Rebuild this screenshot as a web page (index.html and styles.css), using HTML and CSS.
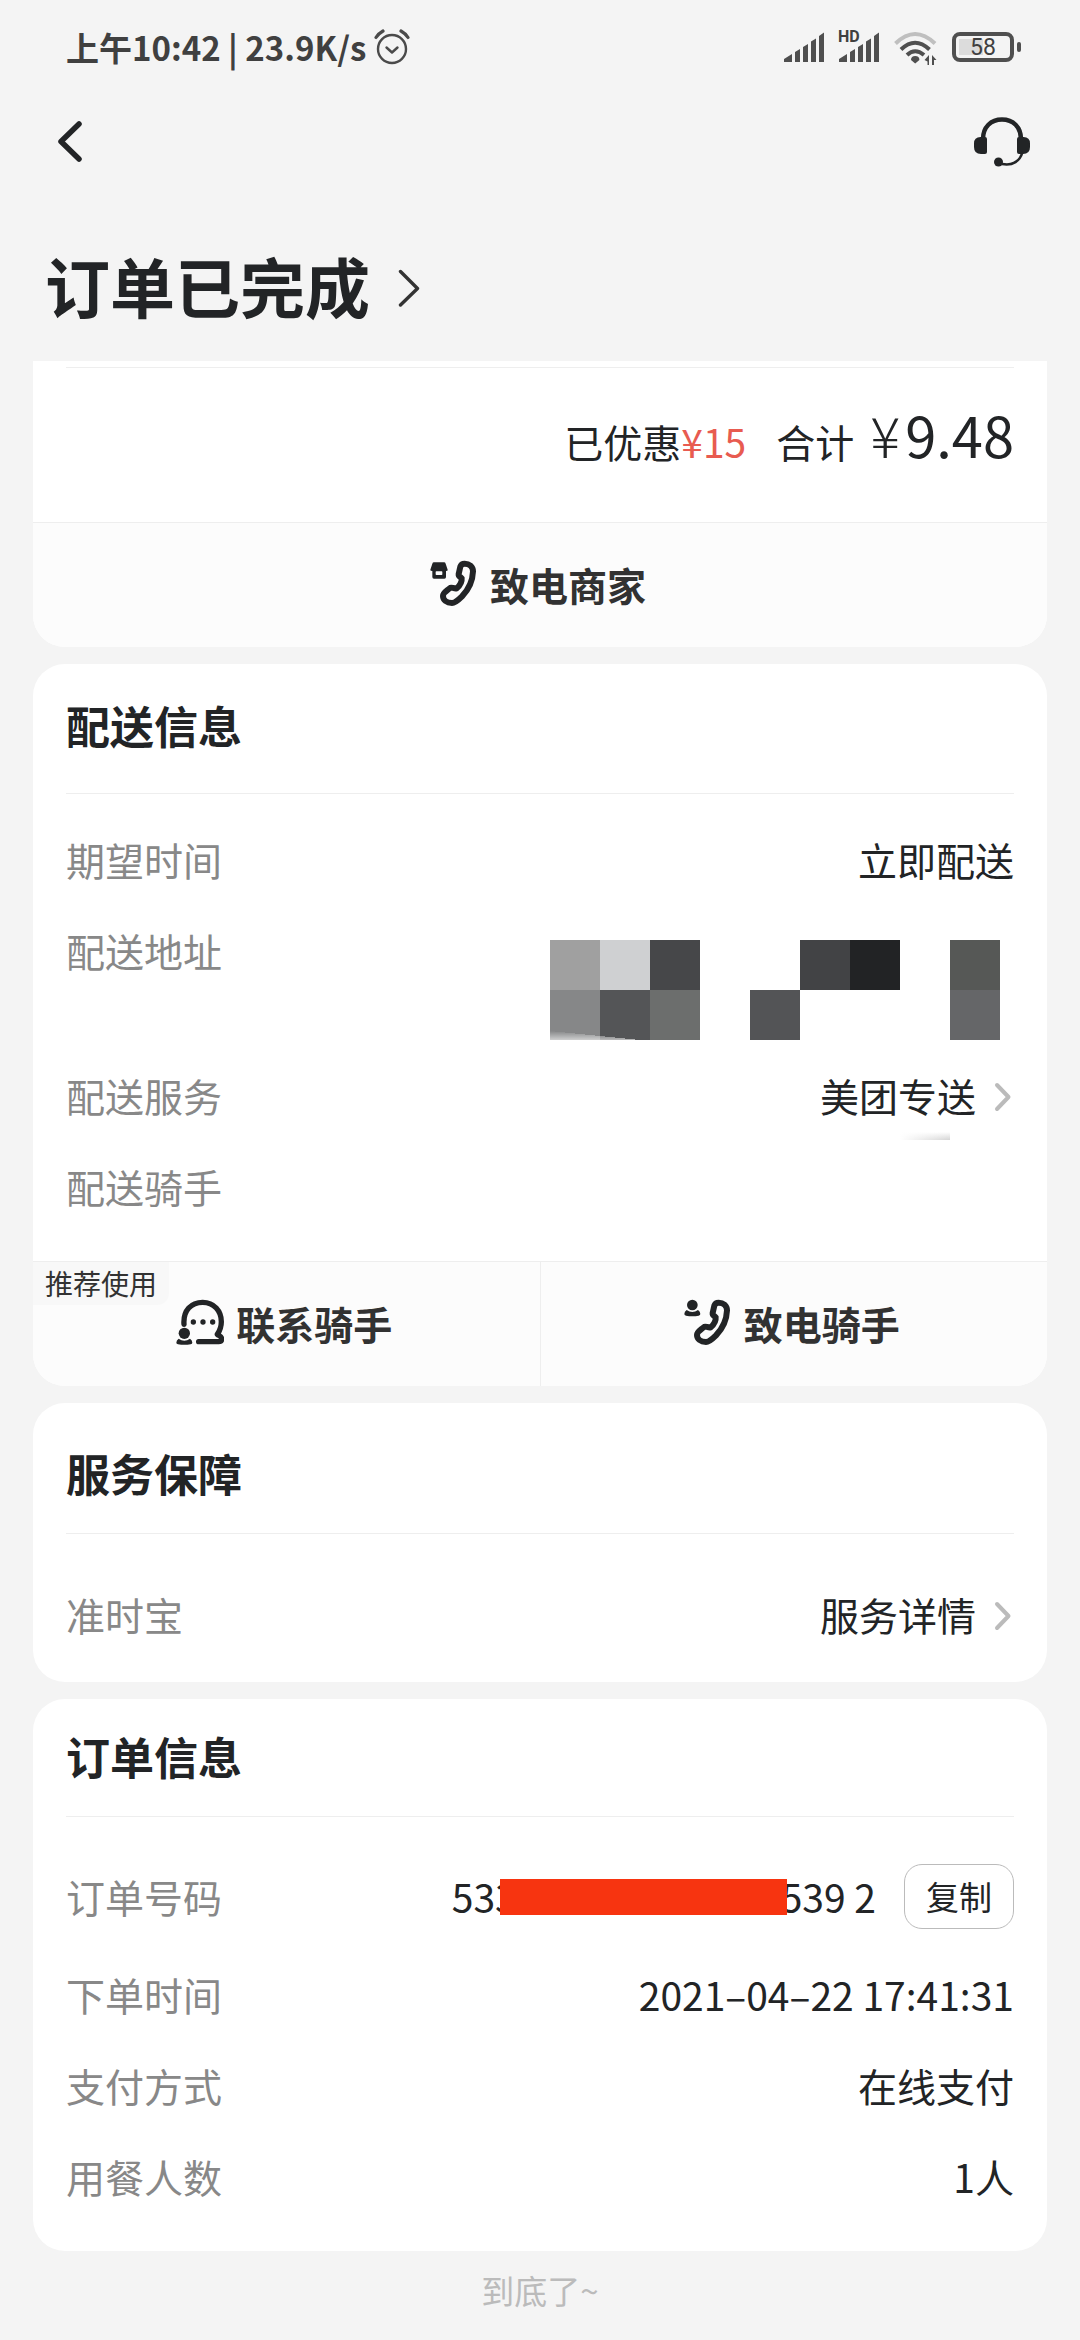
FILE: index.html
```html
<!DOCTYPE html>
<html lang="zh-CN">
<head>
  <meta charset="UTF-8" />
  <meta name="viewport" content="width=device-width, initial-scale=1.0"/>
  <title>订单已完成</title>
  <link rel="stylesheet" href="styles.css">
</head>
<body>
  <!-- 状态栏 -->
  <div class="status-bar">
    <div class="status-left">
      <span>上午10:42 | 23.9K/s</span>
      <svg width="36" height="36" viewBox="0 0 36 36" fill="none" stroke="#4a4a4a" stroke-width="2.4" stroke-linecap="round" stroke-linejoin="round">
        <circle cx="18" cy="20" r="14"/>
        <path d="M12.500 18.500l5.500 5 5.500-5"/>
        <path d="M2 8.500q2.500-4 7-6.500M34 8.500q-2.500-4-7-6.500" stroke-width="3.200"/>
      </svg>
    </div>
    <div class="status-right">
      <svg width="41" height="36" viewBox="0 0 41 36" fill="#4f4f4f">
        <path d="M0 33v-3l8-5v8zM11 33V23l5-3v13zM19 33V18l5-3v18zM27 33V12.500l5-3V33zM35 33V7l5-3.500V33z"/>
      </svg>
      <div class="signal-hd">
        <span class="hd">HD</span>
        <svg width="41" height="36" viewBox="0 0 41 36" fill="#4f4f4f">
          <path d="M0 33v-3l8-5v8zM11 33V23l5-3v13zM19 33V18l5-3v18zM27 33V12.500l5-3V33zM35 33V7l5-3.500V33z"/>
        </svg>
      </div>
      <svg class="wifi" width="44" height="36" viewBox="0 0 44 36" fill="none" stroke="#4f4f4f" stroke-width="4">
        <path d="M1.500 14.500Q21 -4.500 41 14.500" stroke="#bfbfbf"/>
        <path d="M7 20.500Q21 7 35.500 20.500"/>
        <path d="M13 26Q21 18.500 30 26"/>
        <path d="M17 31q0-4 4.200-4t4.200 4l-4.200 3.500z" fill="#4f4f4f" stroke="none"/>
        <path d="M35 26v10h-1.500v-3.500l-3-1.500zM38 36V26l4.500 5H40v5z" fill="#4f4f4f" stroke="none"/>
      </svg>
      <div class="battery"><span>58</span></div>
    </div>
  </div>

  <!-- 导航 -->
  <div class="nav">
    <button class="icon-btn" aria-label="返回">
      <svg width="28" height="44" viewBox="0 0 28 44" fill="none" stroke="#222426" stroke-width="5.500" stroke-linecap="round" stroke-linejoin="round">
        <path d="M23 4L5 21.500l18 17.500"/>
      </svg>
    </button>
    <button class="icon-btn" aria-label="联系客服">
      <svg width="56" height="50" viewBox="0 0 56 50">
        <path d="M9 22C9 10 17 2.500 28 2.500S47 10 47 22" fill="none" stroke="#222426" stroke-width="4.500"/>
        <path d="M6.500 20H11q2 0 2 2v13q0 2-2 2H7q-7 0-7-7v-3.500Q0 20 6.500 20zM49.500 20H45q-2 0-2 2v13q0 2 2 2h4q7 0 7-7v-3.500q0-6.500-6.500-6.500z" fill="#222426"/>
        <path d="M48.500 35C46 44 39 49 28 47" fill="none" stroke="#222426" stroke-width="2.600"/>
        <circle cx="24.500" cy="45" r="4.500" fill="#222426"/>
      </svg>
    </button>
  </div>

  <h1 class="order-status">
    <a href="#">订单已完成
      <svg width="24" height="44" viewBox="0 0 24 44" fill="none" stroke="#333" stroke-width="3.400" stroke-linecap="round" stroke-linejoin="round">
        <path d="M2.500 8.500l17 17L2.500 42"/>
      </svg>
    </a>
  </h1>

  <main class="cards">
    <section class="card card-total">
      <div class="total">
        <span>已优惠<span class="discount">¥15</span></span>
        <span class="sum">合计</span>
        <span class="price"><span class="yen">¥</span>9.48</span>
      </div>
      <div class="actions">
        <button class="action">
          <svg width="48" height="48" viewBox="0 0 144 144">
            <path d="M12 7h30q4 0 5 4l6 18q1 4-5 4v18q0 5-5 5H12q-5 0-5-5V33q-7 0-6-4L7 11q1-4 5-4zM19 34q-2 0-2 2v7q0 2 2 2h16q2 0 2-2v-7q0-2-2-2z" fill="#222426" fill-rule="evenodd"/>
            <path d="M104 11C118 11 129 20 129 34C128 62 116 88 96 109C86 119 76 129 66 129C50 129 39 120 39 108C39 98 52 92 60 84C64 80 72 87 80 85C90 76 96 64 95 55C92 50 85 50 86 42C88 34 90 24 91 20C93 13 98 11 104 11Z" fill="none" stroke="#222426" stroke-width="18"/>
          </svg>
          致电商家
        </button>
      </div>
    </section>

    <section class="card delivery">
      <h2>配送信息</h2>
      <div class="rows">
        <div class="row"><span class="label">期望时间</span><span>立即配送</span></div>
        <div class="row">
          <span class="label">配送地址</span>
          <!-- 打码的地址 -->
          <svg class="mosaic" width="464" height="100" viewBox="0 0 464 100" shape-rendering="crispEdges">
            <defs>
              <linearGradient id="fade" x1="0" y1="0" x2="0" y2="1">
                <stop offset="0" stop-color="#fff" stop-opacity="0"/>
                <stop offset="1" stop-color="#fff" stop-opacity=".6"/>
              </linearGradient>
            </defs>
            <path fill="#a0a0a0" d="M0 0h50v50H0z"/>
            <path fill="#cfd0d2" d="M50 0h50v50H50z"/>
            <path fill="#464749" d="M100 0h50v50h-50z"/>
            <path fill="#868788" d="M0 50h50v50H0z"/>
            <path fill="#545557" d="M50 50h50v50H50z"/>
            <path fill="#6c6e6d" d="M100 50h50v50h-50z"/>
            <path fill="#535456" d="M200 50h50v50h-50z"/>
            <path fill="#424345" d="M250 0h50v50h-50z"/>
            <path fill="#222325" d="M300 0h50v50h-50z"/>
            <path fill="#565856" d="M400 0h50v50h-50z"/>
            <path fill="#656668" d="M400 50h50v50h-50z"/>
            <path fill="url(#fade)" d="M0 91L90 100H0z"/>
          </svg>
        </div>
        <div class="row">
          <span class="label">配送服务</span>
          <a href="#">美团专送
            <svg width="20" height="32" viewBox="0 0 20 32" fill="none" stroke="#bbb" stroke-width="4" stroke-linecap="round" stroke-linejoin="round">
              <path d="M3 5l11.500 12L3 29"/>
            </svg>
          </a>
        </div>
        <div class="row rider"><span class="label">配送骑手</span></div>
      </div>
      <div class="actions">
        <button class="action">
          <span class="tag">推荐使用</span>
          <svg width="48" height="48" viewBox="0 0 144 144">
            <path d="M24 76C21 34 46 10 80 10C114 10 136 36 136 68C136 86 130 97 124 106C130 111 137 112 137 120C137 126 134 128 128 128L68 128" fill="none" stroke="#222426" stroke-width="16" stroke-linecap="round" stroke-linejoin="round"/>
            <g fill="#222426">
              <circle cx="52" cy="69" r="8"/><circle cx="81" cy="69" r="8"/><circle cx="110" cy="69" r="8"/>
              <circle cx="25" cy="103" r="17"/>
              <path d="M8 119q17 12 34 0q7 4 7 12q0 4-5 5q-19 3-38 0q-5-1-5-5q0-8 7-12z"/>
            </g>
          </svg>
          联系骑手
        </button>
        <button class="action">
          <svg width="48" height="48" viewBox="0 0 144 144">
            <g fill="#222426">
              <circle cx="25" cy="18" r="16"/>
              <path d="M8 33q17 12 34 0q7 4 7 12q0 4-5 5q-19 3-38 0q-5-1-5-5q0-8 7-12z"/>
            </g>
            <path d="M104 11C118 11 129 20 129 34C128 62 116 88 96 109C86 119 76 129 66 129C50 129 39 120 39 108C39 98 52 92 60 84C64 80 72 87 80 85C90 76 96 64 95 55C92 50 85 50 86 42C88 34 90 24 91 20C93 13 98 11 104 11Z" fill="none" stroke="#222426" stroke-width="18"/>
          </svg>
          致电骑手
        </button>
      </div>
    </section>

    <section class="card service">
      <h2>服务保障</h2>
      <div class="rows">
        <div class="row">
          <span class="label">准时宝</span>
          <a href="#">服务详情
            <svg width="20" height="32" viewBox="0 0 20 32" fill="none" stroke="#bbb" stroke-width="4" stroke-linecap="round" stroke-linejoin="round">
              <path d="M3 5l11.500 12L3 29"/>
            </svg>
          </a>
        </div>
      </div>
    </section>

    <section class="card order">
      <h2>订单信息</h2>
      <div class="rows">
        <div class="row number-row">
          <span class="label">订单号码</span>
          <span class="number">
            <span>533</span><span class="redact"></span><span>539 2</span>
            <button class="copy">复制</button>
          </span>
        </div>
        <div class="row"><span class="label">下单时间</span><span>2021–04–22 17:41:31</span></div>
        <div class="row"><span class="label">支付方式</span><span>在线支付</span></div>
        <div class="row"><span class="label">用餐人数</span><span>1人</span></div>
      </div>
    </section>
  </main>

  <p class="end">到底了~</p>
</body>
</html>
```
FILE: styles.css
```css
* {
  box-sizing: border-box;
}

body {
  margin: 0;
  min-height: 100vh;
  background: #f4f4f4;
  font-family: "Noto Sans CJK SC", sans-serif;
  font-size: 39px;
  line-height: 51px;
  color: #222426;
}

button {
  font: inherit;
  color: inherit;
  background: none;
  border: none;
  padding: 0;
  cursor: pointer;
}

a {
  color: inherit;
  text-decoration: none;
}

svg {
  display: block;
  flex: none;
}

/* 状态栏 */
.status-bar {
  display: flex;
  justify-content: space-between;
  align-items: center;
  height: 94px;
  padding: 0 60px 0 66px;
  color: #404040;
}

.status-left {
  display: flex;
  align-items: center;
  gap: 8px;
  font-size: 33px;
  line-height: 48px;
  font-weight: 700;
}

.status-right {
  display: flex;
  align-items: center;
  gap: 14px;
}

.signal-hd {
  position: relative;
}

.hd {
  position: absolute;
  top: 0;
  left: -1px;
  font-family: Roboto, sans-serif;
  font-size: 16px;
  line-height: 16px;
  font-weight: 700;
}

.battery {
  position: relative;
  width: 62px;
  height: 30px;
  margin-right: 6px;
  border: 4px solid #4f4f4f;
  border-radius: 8px;
  background: linear-gradient(90deg, #dcdcdc 24px, transparent 24px) 3px 3px / 100% 16px no-repeat;
  font-family: Roboto, sans-serif;
  font-size: 23px;
  line-height: 23px;
  text-align: center;
}

.battery::after {
  content: "";
  position: absolute;
  top: 6px;
  right: -11px;
  width: 4px;
  height: 10px;
  border-radius: 2px;
  background: #4f4f4f;
}

/* 导航 */
.nav {
  display: flex;
  justify-content: space-between;
  align-items: center;
  height: 96px;
  padding: 0 50px 0 56px;
}

.order-status {
  margin: 47px 45px 28px;
  font-size: 65px;
  line-height: 96px;
  font-weight: 700;
}

.order-status a {
  display: inline-flex;
  align-items: center;
  gap: 28px;
}

/* 卡片 */
.cards {
  display: flex;
  flex-direction: column;
  gap: 17px;
  padding: 0 33px;
}

.card {
  background: #fff;
  border-radius: 32px;
}

.card h2 {
  margin: 0 33px;
  padding: 29px 0 36px;
  border-bottom: 1px solid #eee;
  font-size: 44px;
  line-height: 64px;
  font-weight: 700;
}

.rows {
  display: flex;
  flex-direction: column;
  gap: 40px;
  padding: 40px 33px 49px;
}

.row {
  display: flex;
  justify-content: space-between;
}

.row a {
  display: flex;
  align-items: center;
  gap: 18px;
}

.label {
  color: #888;
}

.card-total {
  border-radius: 0 0 32px 32px;
  padding-top: 6px;
}

.total {
  display: flex;
  justify-content: flex-end;
  align-items: baseline;
  margin: 0 33px;
  padding: 26px 0 48px;
  border-top: 1px solid #eee;
}

.discount {
  color: #e85b50;
}

.sum {
  margin: 0 16px 0 30px;
}

.price {
  font-size: 56px;
  line-height: 80px;
}

.yen {
  margin-right: 5px;
  font-weight: 300;
}

.actions {
  display: flex;
  border-top: 1px solid #eee;
  border-radius: 0 0 32px 32px;
  background: #fcfcfc;
}

.action {
  position: relative;
  flex: 1;
  display: flex;
  justify-content: center;
  align-items: center;
  gap: 12px;
  height: 124px;
  padding: 0 4px 2px 0;
  font-weight: 700;
  color: #323232;
}

.action + .action {
  border-left: 1px solid #eee;
}

.tag {
  position: absolute;
  top: 0;
  left: 0;
  padding: 0 12px;
  border-bottom-right-radius: 12px;
  background: #f8f8f8;
  font-size: 28px;
  line-height: 43px;
  font-weight: 400;
}

.mosaic {
  margin: 15px 0 -10px;
}

.rider {
  position: relative;
}

/* 打码边缘的残影 */
.rider::after {
  content: "";
  position: absolute;
  top: -29px;
  right: 64px;
  width: 50px;
  height: 8px;
  background: linear-gradient(to right, #fff, transparent), linear-gradient(#fff, #d4d4d4);
}

.service h2 {
  padding: 38px 0 28px;
}

.service .rows {
  padding: 55px 33px 42px;
}

.order h2 {
  padding: 25px 0 28px;
}

.order .rows {
  padding-top: 47px;
}

.number-row,
.number {
  display: flex;
  align-items: center;
}

/* 遮住中间的号码 */
.redact {
  position: relative;
  width: 287px;
  height: 36px;
  margin: 0 -6px 0 -17px;
  background: #f73410;
}

.copy {
  width: 110px;
  height: 65px;
  margin-left: 28px;
  border: 1px solid #bbb;
  border-radius: 18px;
  font-size: 33px;
}

.end {
  margin: 14px 0 0;
  font-size: 33px;
  text-align: center;
  color: #bbb;
}
```
